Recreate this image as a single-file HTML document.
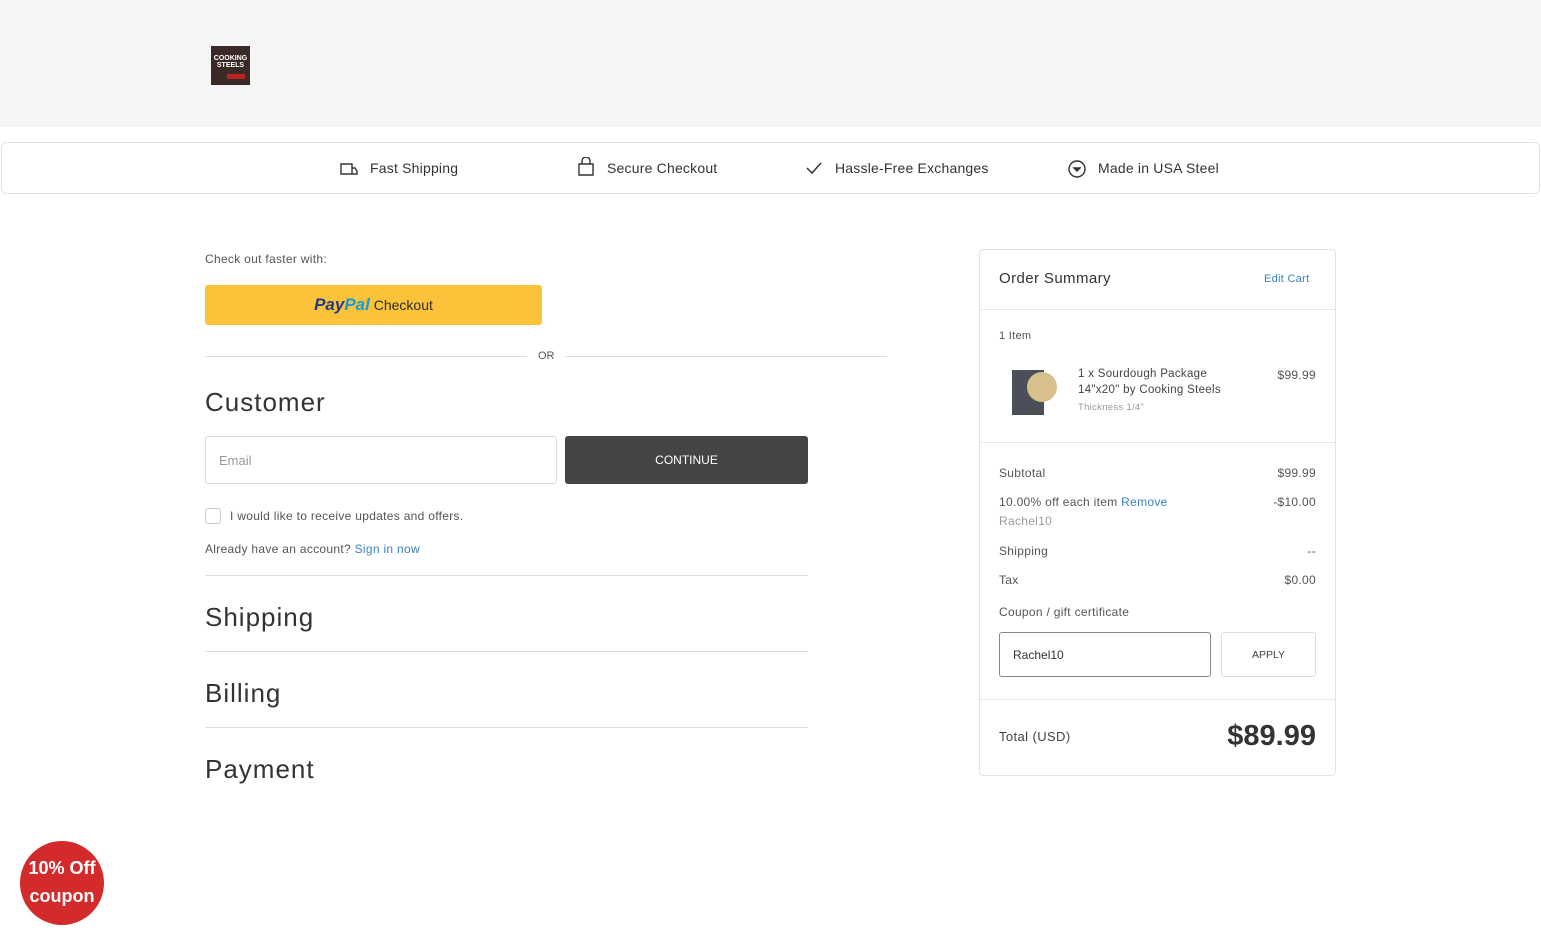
<!DOCTYPE html>
<html><head><meta charset="utf-8"><style>
*{box-sizing:border-box;margin:0;padding:0}
body{width:1541px;height:945px;background:#fff;font-family:"Liberation Sans",sans-serif;color:#333;position:relative;overflow:hidden}
.a{position:absolute;white-space:nowrap}
.hdr{position:absolute;left:0;top:0;width:1541px;height:127px;background:#f5f5f5}
.bar{position:absolute;left:1px;top:142px;width:1539px;height:52px;border:1px solid #e3e3e3;border-radius:6px;background:#fff}
.bar span{position:absolute;top:17px;font-size:14px;color:#333;letter-spacing:0.2px}
.line{position:absolute;height:1px;background:#ddd}
h2{position:absolute;font-weight:300;font-size:26px;color:#333;letter-spacing:1px}
.s{font-size:12px;color:#555;letter-spacing:0.3px}
.blue{color:#3b82c4}
.box{position:absolute;left:979px;top:249px;width:357px;height:527px;border:1px solid #e3e3e3;border-radius:4px}
.r{text-align:right;width:120px}
</style></head><body>
<div class="hdr"></div>
<div class="a" style="left:211px;top:46px;width:39px;height:39px;background:#3a2a27;color:#fff;font-size:7px;font-weight:bold;line-height:7px;text-align:center;padding-top:9px">COOKING<br>STEELS<div style="margin:5px 0 0 16px;width:18px;height:5px;background:#b22"></div></div>
<div class="bar">
<svg class="a" style="left:337px;top:18px" width="20" height="16" viewBox="0 0 20 16" fill="none" stroke="#333" stroke-width="1.4"><path d="M2 3h11v10H2zM13 7h3l2 3v3h-5"/></svg>
<span style="left:368px">Fast Shipping</span>
<svg class="a" style="left:575px;top:14px" width="18" height="20" viewBox="0 0 18 20" fill="none" stroke="#333" stroke-width="1.4"><path d="M2 7h14v11H2zM5 7V4a4 4 0 0 1 8 0v3"/></svg>
<span style="left:605px">Secure Checkout</span>
<svg class="a" style="left:803px;top:17px" width="18" height="16" viewBox="0 0 18 16" fill="none" stroke="#333" stroke-width="1.5"><path d="M2 8l5 5L16 3"/></svg>
<span style="left:833px">Hassle-Free Exchanges</span>
<svg class="a" style="left:1065px;top:16px" width="20" height="20" viewBox="0 0 20 20" fill="none" stroke="#333" stroke-width="1.4"><circle cx="10" cy="10" r="8"/><path d="M7 9h6l-3 3z" fill="#333"/></svg>
<span style="left:1096px">Made in USA Steel</span>
</div>

<div class="a s" style="left:205px;top:252px">Check out faster with:</div>
<div class="a" style="left:205px;top:285px;width:337px;height:40px;background:#fcc23a;border-radius:3px;text-align:center;line-height:40px;font-size:14px"><b style="font-style:italic;font-size:17px;color:#253b80">Pay</b><b style="font-style:italic;font-size:17px;color:#179bd7">Pal</b> <span style="color:#2c2e2f">Checkout</span></div>
<div class="line" style="left:205px;top:356px;width:322px"></div>
<div class="a" style="left:538px;top:350px;font-size:11px;color:#555">OR</div>
<div class="line" style="left:565px;top:356px;width:322px"></div>
<h2 style="left:205px;top:387px">Customer</h2>
<div class="a" style="left:205px;top:436px;width:352px;height:48px;border:1px solid #ddd;border-radius:3px;font-size:13px;color:#999;padding:16px 13px">Email</div>
<div class="a" style="left:565px;top:436px;width:243px;height:48px;background:#444;border-radius:3px;color:#fff;font-size:12px;text-align:center;line-height:48px">CONTINUE</div>
<div class="a" style="left:205px;top:508px;width:16px;height:16px;border:1px solid #ccc;border-radius:3px"></div>
<div class="a s" style="left:230px;top:509px">I would like to receive updates and offers.</div>
<div class="a s" style="left:205px;top:542px">Already have an account? <span class="blue">Sign in now</span></div>
<div class="line" style="left:205px;top:575px;width:603px"></div>
<h2 style="left:205px;top:602px">Shipping</h2>
<div class="line" style="left:205px;top:651px;width:603px"></div>
<h2 style="left:205px;top:678px">Billing</h2>
<div class="line" style="left:205px;top:727px;width:603px"></div>
<h2 style="left:205px;top:754px">Payment</h2>

<div class="box"></div>
<div class="a" style="left:999px;top:270px;font-size:15px;color:#333;letter-spacing:0.4px">Order Summary</div>
<div class="a blue" style="left:1264px;top:273px;font-size:11px;letter-spacing:0.3px">Edit Cart</div>
<div class="line" style="left:980px;top:309px;width:355px;background:#e8e8e8"></div>
<div class="a s" style="left:999px;top:330px;font-size:11px">1 Item</div>
<div class="a" style="left:1012px;top:370px;width:32px;height:45px;background:#4a4f5a"></div>
<div class="a" style="left:1027px;top:372px;width:30px;height:30px;border-radius:50%;background:#d7c08c"></div>
<div class="a" style="left:1078px;top:366px;font-size:11.5px;color:#444;line-height:16px;letter-spacing:0.3px">1 x Sourdough Package<br>14"x20" by Cooking Steels</div>
<div class="a" style="left:1078px;top:402px;font-size:9.5px;color:#999;letter-spacing:0.3px">Thickness 1/4"</div>
<div class="a s r" style="left:1196px;top:368px">$99.99</div>
<div class="line" style="left:980px;top:442px;width:355px;background:#e8e8e8"></div>
<div class="a s" style="left:999px;top:466px">Subtotal</div><div class="a s r" style="left:1196px;top:466px">$99.99</div>
<div class="a s" style="left:999px;top:495px">10.00% off each item <span class="blue">Remove</span></div><div class="a s r" style="left:1196px;top:495px">-$10.00</div>
<div class="a s" style="left:999px;top:514px;color:#999">Rachel10</div>
<div class="a s" style="left:999px;top:544px">Shipping</div><div class="a s r" style="left:1196px;top:544px">--</div>
<div class="a s" style="left:999px;top:573px">Tax</div><div class="a s r" style="left:1196px;top:573px">$0.00</div>
<div class="a s" style="left:999px;top:605px">Coupon / gift certificate</div>
<div class="a" style="left:999px;top:632px;width:212px;height:45px;border:1px solid #888;border-radius:3px;font-size:12px;padding:15px 13px;color:#333">Rachel10</div>
<div class="a" style="left:1221px;top:632px;width:95px;height:45px;border:1px solid #ddd;border-radius:3px;font-size:10.5px;text-align:center;line-height:44px;color:#444">APPLY</div>
<div class="line" style="left:980px;top:699px;width:355px;background:#e8e8e8"></div>
<div class="a" style="left:999px;top:729px;font-size:13px;color:#444;letter-spacing:0.4px">Total (USD)</div>
<div class="a" style="left:1115px;top:720px;width:201px;text-align:right;font-size:29px;font-weight:bold;color:#333">$89.99</div>

<div class="a" style="left:20px;top:841px;width:84px;height:84px;border-radius:50%;background:#d32b2b;color:#fff;font-weight:bold;font-size:18px;text-align:center;line-height:28px;padding-top:13px">10% Off<br>coupon</div>
</body></html>
